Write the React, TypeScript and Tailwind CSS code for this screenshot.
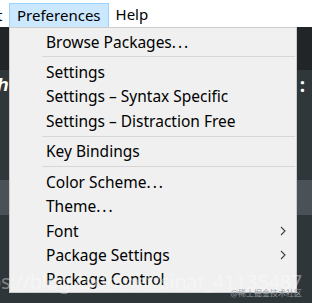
import React from "react";

const Chevron = () => (
  <svg width="6" height="10" viewBox="0 0 6 10" className="absolute left-[270px] top-1/2 -translate-y-1/2">
    <polyline points="1,1 5,5 1,9" fill="none" stroke="#404040" strokeWidth="1.1" />
  </svg>
);

const Item = ({ label, dots, sub }: { label: string; dots?: boolean; sub?: boolean }) => (
  <div className="relative h-[24.3px] pl-[36px] text-[15.5px] leading-[24.3px] text-[#000] whitespace-nowrap">
    {label}
    {dots && <span className="tracking-[2px]">...</span>}
    {sub && <Chevron />}
  </div>
);

const Sep = () => (
  <div className="h-[6.4px] flex items-center pl-[32px] pr-[1px]">
    <div className="h-px w-full bg-[#d7d7d7]" />
  </div>
);

export default function App() {
  return (
    <div
      className="relative w-[312px] h-[303px] overflow-hidden bg-[#2f363a]"
      style={{ fontFamily: '"Noto Sans", "Open Sans", sans-serif' }}
    >
      {/* menu bar */}
      <div className="h-[27px] bg-white flex items-end text-[15px] text-black">
        <span className="ml-[-3px] w-[12px] leading-[24px] h-[24px] overflow-hidden">t</span>
        <div className="h-[24px] px-[7px] leading-[23px] bg-[#cce8ff] border border-[#99d1ff] border-b-0">
          Preferences
        </div>
        <div className="h-[24px] px-[7px] leading-[23px]">Help</div>
      </div>
      {/* background editor bands */}
      <div className="h-[43px] bg-[#212528]" />
      <div className="h-[110px] bg-[#30373b] flex justify-between items-start pt-[4px]">
        <span
          className="ml-[-3px] text-[19px] leading-[22px] font-bold italic text-white"
          style={{ fontFamily: '"Liberation Sans", sans-serif' }}
        >
          h
        </span>
        <span className="mr-[7px] text-[19px] leading-[22px] font-bold text-white">:</span>
      </div>
      <div className="h-[35px] bg-[#4a5157]" />
      <div className="h-[88px] bg-[#2f363a]" />

      {/* dropdown */}
      <div className="absolute left-[9px] top-[27px] w-[288px] h-[266px] bg-[#f0f0f0] border border-[#cccccc] pt-[1.5px]">
        <Item label="Browse Packages" dots />
        <Sep />
        <Item label="Settings" />
        <Item label="Settings – Syntax Specific" />
        <Item label="Settings – Distraction Free" />
        <Sep />
        <Item label="Key Bindings" />
        <Sep />
        <Item label="Color Scheme" dots />
        <Item label="Theme" dots />
        <Item label="Font" sub />
        <Item label="Package Settings" sub />
        <Item label="Package Control" />
      </div>

      {/* watermark */}
      <div className="absolute right-[10px] top-[271px] flex flex-col items-end pointer-events-none">
        <div className="text-[20px] leading-[22px] text-white/40 whitespace-nowrap tracking-[-0.3px]">
          https://blog.csdn.net/sinat_41135487
        </div>
        <div
          className="text-[8px] leading-[9px] text-[#9aa0a6] whitespace-nowrap -mt-[5px]"
          style={{ fontFamily: '"Noto Sans CJK SC", sans-serif' }}
        >
          @稀土掘金技术社区
        </div>
      </div>
    </div>
  );
}
